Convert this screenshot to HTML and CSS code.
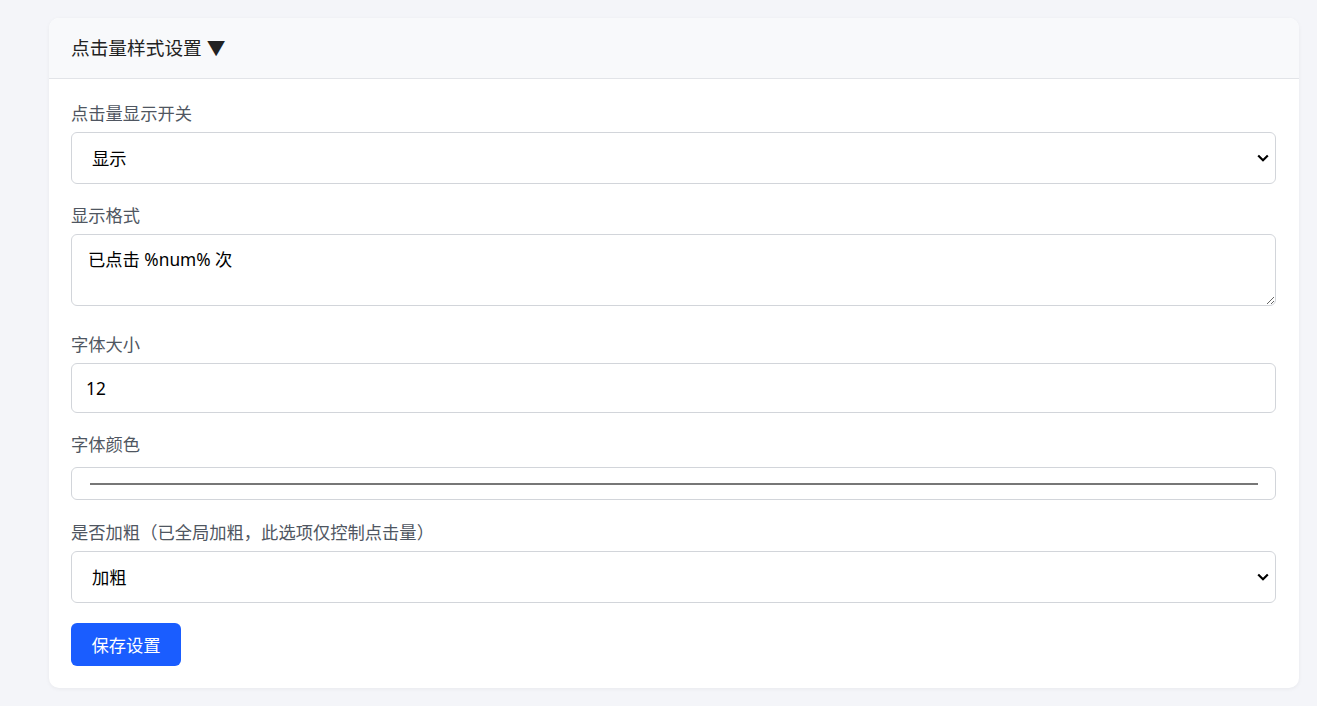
FILE: index.html
```html
<!DOCTYPE html>
<html lang="zh-CN">
<head>
<meta charset="utf-8">
<title>点击量样式设置</title>
<link rel="stylesheet" href="styles.css">
</head>
<body>
<div class="card">
  <div class="card-header">点击量样式设置 ▼</div>
  <div class="card-body">
    <div class="group">
      <label class="label">点击量显示开关</label>
      <select class="field select">
        <option>显示</option>
        <option>隐藏</option>
      </select>
    </div>
    <div class="group group-textarea">
      <label class="label">显示格式</label>
      <textarea class="field textarea">已点击 %num% 次</textarea>
    </div>
    <div class="group">
      <label class="label">字体大小</label>
      <input class="field input" type="text" value="12">
    </div>
    <div class="group group-color">
      <label class="label">字体颜色</label>
      <div class="color-field"><div class="color-swatch"></div></div>
    </div>
    <div class="group">
      <label class="label">是否加粗（已全局加粗，此选项仅控制点击量）</label>
      <select class="field select">
        <option>加粗</option>
        <option>不加粗</option>
      </select>
    </div>
    <button class="btn" type="button">保存设置</button>
  </div>
</div>
</body>
</html>
```

FILE: styles.css
```css
* { box-sizing: border-box; }

html, body {
  margin: 0;
  padding: 0;
  background: #f4f5f9;
  font-family: "Noto Sans", "Noto Sans CJK SC", sans-serif;
}

body {
  padding: 18px 18px 18px 49px;
}

.card {
  background: #ffffff;
  border-radius: 10px;
  box-shadow: 0 1px 4px rgba(0, 0, 0, 0.05);
  overflow: hidden;
}

.card-header {
  height: 61px;
  display: flex;
  align-items: center;
  padding: 0 22px 4px 22px;
  background: #f8f9fb;
  border-bottom: 1px solid #e2e4e8;
  font-size: 18.7px;
  color: #222;
}

.card-body {
  padding: 22px 23px 22px 22px;
}

.group {
  margin-bottom: 19px;
}

.group-textarea {
  margin-bottom: 26px;
}

.group-color {
  margin-bottom: 20px;
}

.label {
  display: block;
  font-size: 17.3px;
  line-height: 26px;
  color: #4f5661;
  margin-bottom: 5px;
}

.field {
  display: block;
  width: 100%;
  border: 1px solid #d2d5da;
  border-radius: 6px;
  background: #fff;
  color: #000;
  font-family: "Noto Sans", "Noto Sans CJK SC", sans-serif;
  font-size: 17.3px;
  outline: none;
}

.select {
  height: 52px;
  padding: 0 30px 0 20px;
  -webkit-appearance: none;
  appearance: none;
  background-image: url("data:image/svg+xml;utf8,<svg xmlns='http://www.w3.org/2000/svg' width='12' height='8' viewBox='0 0 12 8'><path d='M1.2 1.5 L6 6.2 L10.8 1.5' fill='none' stroke='black' stroke-width='2.2'/></svg>");
  background-repeat: no-repeat;
  background-position: right 6px center;
  background-size: 12px 8px;
}

.textarea {
  height: 72px;
  padding: 12px 16px;
  line-height: 26px;
  resize: vertical;
}

.input {
  height: 50px;
  padding: 0 14px;
}

.color-field {
  margin-top: 9px;
  height: 33px;
  border: 1px solid #d2d5da;
  border-radius: 6px;
  display: flex;
  align-items: center;
  padding: 0 17px 0 18px;
}

.color-swatch {
  flex: 1;
  height: 2px;
  background: #777;
}

.btn {
  display: block;
  width: 110px;
  height: 43px;
  border: none;
  border-radius: 6px;
  background: #1a5dff;
  color: #fff;
  font-family: "Noto Sans", "Noto Sans CJK SC", sans-serif;
  font-size: 17.3px;
  padding: 0;
  margin-top: 20px;
  cursor: pointer;
}
```
